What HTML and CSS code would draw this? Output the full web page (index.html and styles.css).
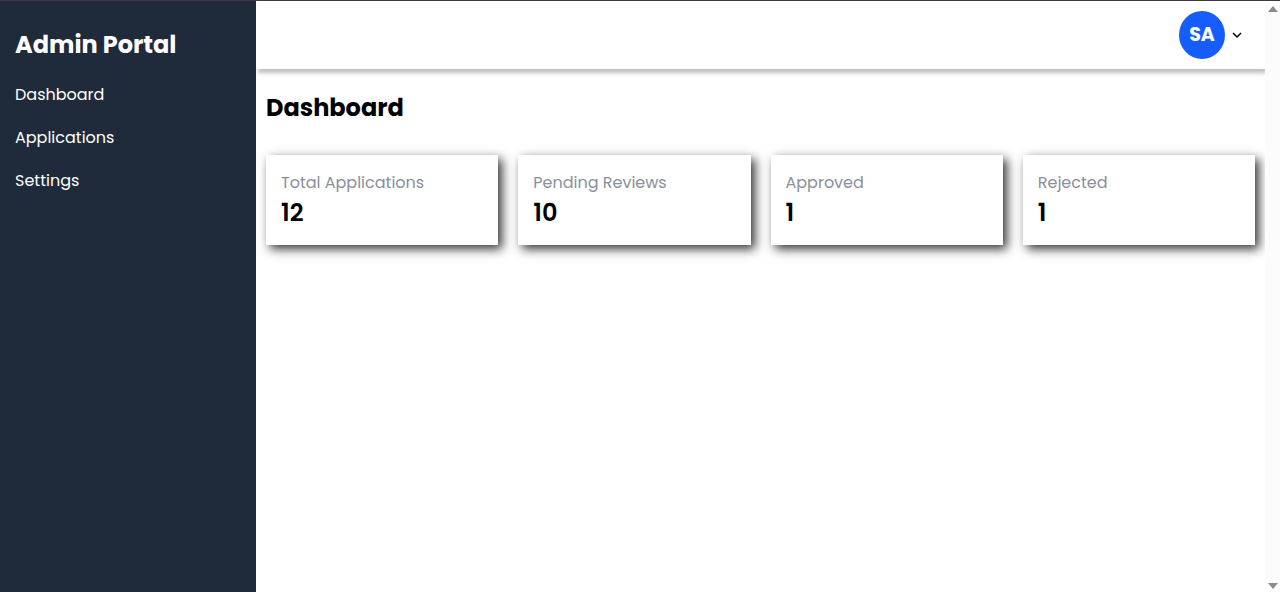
FILE: index.html
```html
<!DOCTYPE html>
<html lang="en">
<head>
<meta charset="utf-8">
<meta name="viewport" content="width=device-width, initial-scale=1">
<title>Admin Portal</title>
<link rel="stylesheet" href="styles.css">
</head>
<body>
<div class="app">
  <aside class="sidebar">
    <h1 class="brand">Admin Portal</h1>
    <nav class="nav">
      <a class="nav-link" href="#dashboard">Dashboard</a>
      <a class="nav-link" href="#applications">Applications</a>
      <a class="nav-link" href="#settings">Settings</a>
    </nav>
  </aside>
  <div class="page">
    <header class="topbar">
      <button class="account" type="button">
        <span class="avatar">SA</span>
        <svg class="chevron" viewBox="0 0 10 10" aria-hidden="true"><path d="M1 3l4 4 4-4"/></svg>
      </button>
    </header>
    <main class="content">
      <h2 class="title">Dashboard</h2>
      <section class="cards">
        <article class="card"><p class="label">Total Applications</p><p class="value">12</p></article>
        <article class="card"><p class="label">Pending Reviews</p><p class="value">10</p></article>
        <article class="card"><p class="label">Approved</p><p class="value">1</p></article>
        <article class="card"><p class="label">Rejected</p><p class="value">1</p></article>
      </section>
    </main>
  </div>
  <div class="scrollbar" aria-hidden="true">
    <svg class="arrow" viewBox="0 0 10 6"><path d="M0 6 5 0l5 6z"/></svg>
    <svg class="arrow" viewBox="0 0 10 6"><path d="M0 0h10L5 6z"/></svg>
  </div>
</div>
</body>
</html>
```

FILE: styles.css
```css
* {
  box-sizing: border-box;
  margin: 0;
  padding: 0;
}

body {
  font-family: Poppins, Inter, "Open Sans", sans-serif;
  font-size: 16px;
  line-height: 24px;
  color: #000;
  background: #fff;
}

.app {
  display: flex;
  min-height: 100vh;
  border-top: 1px solid #443740;
}

.sidebar {
  flex: 0 0 256px;
  padding: 26px 15px;
  color: #fff;
  background: #1f2a3a;
}

.brand {
  font-size: 24px;
  line-height: 36px;
  font-weight: 700;
}

.nav {
  display: flex;
  flex-direction: column;
  gap: 19px;
  margin-top: 20px;
}

.nav-link {
  color: inherit;
  text-decoration: none;
}

.page {
  flex: 1;
  min-width: 0;
  overflow: hidden;
}

.topbar {
  display: flex;
  justify-content: flex-end;
  padding: 10px 20px;
  box-shadow: 2px 4px 4px rgba(0, 0, 0, 0.25);
}

.account {
  display: flex;
  align-items: center;
  gap: 7px;
  border: 0;
  font: inherit;
  color: inherit;
  background: none;
  cursor: pointer;
}

.avatar {
  width: 46px;
  border-radius: 50%;
  font-size: 19px;
  line-height: 48px;
  font-weight: 700;
  text-align: center;
  color: #fff;
  background: #155dfc;
}

.chevron {
  width: 10px;
  height: 10px;
  margin-right: 3px;
  fill: none;
  stroke: #000;
  stroke-width: 1.5;
}

.content {
  padding: 21px 10px;
}

.title {
  font-size: 24px;
  line-height: 36px;
  font-weight: 700;
}

.cards {
  display: grid;
  grid-template-columns: repeat(4, 1fr);
  gap: 20px;
  margin-top: 29px;
}

.card {
  padding: 16px 15px 14px;
  background: #fff;
  box-shadow: 4px 4px 10px rgba(0, 0, 0, 0.8);
}

.label {
  color: #8a909c;
}

.value {
  font-size: 24px;
  line-height: 36px;
  font-weight: 600;
}

.scrollbar {
  display: flex;
  flex: 0 0 15px;
  flex-direction: column;
  align-items: center;
  justify-content: space-between;
  padding: 5px 0 3px;
  background: #fcfcfc;
}

.arrow {
  width: 10px;
  height: 6px;
  fill: #8b8b8b;
}
```
